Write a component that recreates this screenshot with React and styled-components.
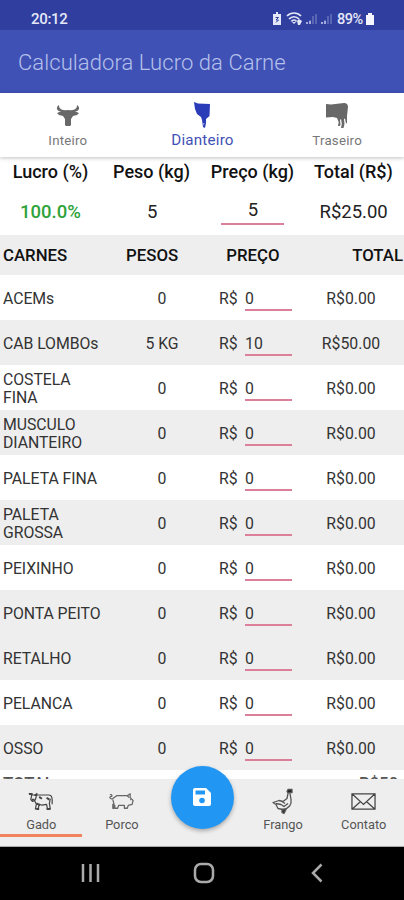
import React, { useState } from "react";
import styled, { createGlobalStyle } from "styled-components";

const meats = [
  { name: "ACEMs", weight: "0", price: "0", total: "R$0.00" },
  { name: "CAB LOMBOs", weight: "5 KG", price: "10", total: "R$50.00", shaded: true },
  { name: "COSTELA FINA", weight: "0", price: "0", total: "R$0.00" },
  { name: "MUSCULO DIANTEIRO", weight: "0", price: "0", total: "R$0.00", shaded: true },
  { name: "PALETA FINA", weight: "0", price: "0", total: "R$0.00" },
  { name: "PALETA GROSSA", weight: "0", price: "0", total: "R$0.00", shaded: true },
  { name: "PEIXINHO", weight: "0", price: "0", total: "R$0.00" },
  { name: "PONTA PEITO", weight: "0", price: "0", total: "R$0.00", shaded: true },
  { name: "RETALHO", weight: "0", price: "0", total: "R$0.00", shaded: true },
  { name: "PELANCA", weight: "0", price: "0", total: "R$0.00" },
  { name: "OSSO", weight: "0", price: "0", total: "R$0.00", shaded: true },
];

const BullIcon = () => (
  <svg width="26" height="24" viewBox="0 0 26 24" fill="#686868">
    <path d="M4 2C0 5 2 8 7 9l6-1 6 1c5-1 7-4 3-7 0 3-1 4-4 5l-5 1-5-1C5 6 4 5 4 2Z" />
    <path d="M2 10l5-2 6-1 6 1 5 2-2 2-4 1-2 3v6l-1 1h-4l-1-1v-6l-2-3-4-1Z" />
  </svg>
);

const FrontIcon = () => (
  <svg width="18" height="28" viewBox="0 0 18 28" fill="#2b3cb8">
    <path d="M1 1l4 1.5 12 .5-.5 12-3.5 3v4l-1 5-2-1-1-7-1-3-4-3-2-5Z" />
    <path d="M10 22l.7 3 .8-3Z" fill="#9da6df" />
  </svg>
);

const BackIcon = () => (
  <svg width="24" height="28" viewBox="0 0 24 28" fill="#686868">
    <path d="M1 3l5 .5L19 2c3 0 4 2 4 4l-1 9v7l-1 .5-1-5-1 .5.5 5-1 4H16l.8-4-.8-5-1 1 .5 5-1 1H13l.7-4-1.7-4-4-1-7 .5Z" />
  </svg>
);

const CowIcon = () => (
  <svg width="26" height="21" viewBox="0 0 28 22" fill="none" stroke="#444" strokeWidth="1.3" strokeLinejoin="round">
    <path d="M8 4h14c3 0 4 2 4 5v5M24 8l-1 5 1 6h-3l-1-5-5 1-3-1-1 5H8l1-5-2-4" />
    <path d="M1 2l3 2h4l2-2M4 4l-1 5 2 2 3-2 1-4" />
    <path d="M1 3h4M7 4h3M4 9h3M12 6l3 2M20 7l3 2M9 13l4 2M9 19h3M20 19h4" strokeWidth="2.1" />
  </svg>
);

const PigIcon = () => (
  <svg width="27" height="21" viewBox="0 0 28 22" fill="none" stroke="#666" strokeWidth="1.3" strokeLinejoin="round">
    <path d="M2 4c2-1 3 2 1 2-2 0-1 3 2 2l4-3h11l3-2v4l3 3-1 4-4 1-1 3h-3v-3h-6l-1 3h-3v-3l-2-1v4H6v-5L5 9" />
    <path d="M20 5l2 2M23 9h1" />
  </svg>
);

const ChickenIcon = () => (
  <svg width="24" height="28" viewBox="0 0 24 28" fill="none" stroke="#555" strokeWidth="1.3" strokeLinejoin="round">
    <path d="M17 6l-1 5-4 3-4-1-6 2 3 2 2 4 5 1c6-1 9-5 8-10l-1-6M5 16l5 1 3 2 4-3M11 14l3 2" />
    <path d="M16 4l1-2h4v3l-4 .5Z" fill="#222" />
    <path d="M11 22h4l-2 4-2-1Z" fill="#333" />
  </svg>
);

const MailIcon = () => (
  <svg width="25" height="19" viewBox="0 0 26 20" fill="none" stroke="#444" strokeWidth="1.3">
    <path d="M1 2h24v16H1ZM1 2l12 11L25 2M1 18l9-8M25 18l-9-8" />
  </svg>
);

const StatusIcons = () => (
  <svg width="60" height="16" viewBox="0 0 60 16">
    <path d="M2 3h2V1h2v2h3v11H1V3Z" fill="#e5e8f8" />
    <path d="M3.5 6.5h3L4 9h2.5L4 11.5" fill="none" stroke="#303f9f" />
    <path d="M15 5c4-4 10-4 14 0M17 8c3-3 7-3 10 0M19.5 10.5c1-2 4-2 5 0" fill="none" stroke="#e5e8f8" strokeWidth="1.7" />
    <path d="M20 11h4l-2 2ZM25 10l2-2 3 2-2 4h-2Z" fill="#e5e8f8" />
    <path d="M35 13v-2M38 13v-4M41 13V5M44 13V3M50 13v-2M53 13v-4M56 13V5M59 13V3" stroke="#5966b5" strokeWidth="2" />
    <path d="M35 13v-2M38 13v-3M50 13v-2M53 13v-3" stroke="#a3acdd" strokeWidth="2" />
  </svg>
);

const SaveIcon = () => (
  <svg width="20" height="20" viewBox="0 0 20 20">
    <path d="M3 1h11l5 5v11q0 2-2 2H3q-2 0-2-2V3q0-2 2-2Z" fill="#fff" />
    <path d="M3.5 3.5H13v4H3.5Z" fill="#2196f3" />
    <circle cx="10" cy="13.5" r="2.8" fill="#2196f3" />
  </svg>
);

const tabs = [
  { name: "Inteiro", icon: <BullIcon /> },
  { name: "Dianteiro", icon: <FrontIcon /> },
  { name: "Traseiro", icon: <BackIcon /> },
];

export default function App() {
  const [tab, setTab] = useState("Dianteiro");
  const [profitPrice, setProfitPrice] = useState("5");
  const [prices, setPrices] = useState(meats.map((meat) => meat.price));

  const handlePrice = (index, value) => {
    setPrices(prices.map((price, i) => (i === index ? value : price)));
  };

  return (
    <Screen>
      <GlobalStyle />
      <StatusBar>
        <span>20:12</span>
        <StatusRight>
          <StatusIcons />
          <BatteryText>89%</BatteryText>
          <svg width="8" height="12" viewBox="0 0 8 12" fill="#f4f5ff">
            <path d="M2 0h4v2h2v10H0V2h2Z" />
          </svg>
        </StatusRight>
      </StatusBar>
      <AppBar>Calculadora Lucro da Carne</AppBar>
      <Tabs>
        {tabs.map(({ name, icon }) => (
          <Tab key={name} $active={tab === name} onClick={() => setTab(name)}>
            <TabIcon>{icon}</TabIcon>
            <span>{name}</span>
          </Tab>
        ))}
      </Tabs>
      <Content>
        <SummaryTitles>
          <span>Lucro (%)</span>
          <span>Peso (kg)</span>
          <span>Preço (kg)</span>
          <span>Total (R$)</span>
        </SummaryTitles>
        <SummaryValues>
          <Profit>100.0%</Profit>
          <span>5</span>
          <SummaryInput value={profitPrice} onChange={(e) => setProfitPrice(e.target.value)} />
          <span>R$25.00</span>
        </SummaryValues>
        <TableHeader>
          <span>CARNES</span>
          <span>PESOS</span>
          <span>PREÇO</span>
          <span>TOTAL</span>
        </TableHeader>
        {meats.map((meat, index) => (
          <Row key={meat.name} $shaded={meat.shaded}>
            <Name>{meat.name}</Name>
            <Cell>{meat.weight}</Cell>
            <Price>
              R$
              <PriceInput value={prices[index]} onChange={(e) => handlePrice(index, e.target.value)} />
            </Price>
            <Cell>{meat.total}</Cell>
          </Row>
        ))}
        <TotalRow>
          <span>TOTAL</span>
          <span>R$50.00</span>
        </TotalRow>
      </Content>
      <BottomNav>
        <NavItem $active>
          <CowIcon />
          <span>Gado</span>
        </NavItem>
        <NavItem>
          <PigIcon />
          <span>Porco</span>
        </NavItem>
        <SaveButton aria-label="Salvar">
          <SaveIcon />
        </SaveButton>
        <NavItem>
          <ChickenIcon />
          <span>Frango</span>
        </NavItem>
        <NavItem>
          <MailIcon />
          <span>Contato</span>
        </NavItem>
      </BottomNav>
      <SystemBar>
        <svg width="20" height="20" viewBox="0 0 20 20">
          <path d="M2 1v18M9.5 1v18M17 1v18" />
        </svg>
        <svg width="22" height="22" viewBox="0 0 22 22">
          <rect x="2" y="2" width="18" height="18" rx="6" />
        </svg>
        <svg width="14" height="20" viewBox="0 0 14 20">
          <path d="M11.5 1.5L3 10l8.5 8.5" />
        </svg>
      </SystemBar>
    </Screen>
  );
}

const GlobalStyle = createGlobalStyle`
  * {
    box-sizing: border-box;
  }
  body {
    margin: 0;
    font-family: Roboto, "Liberation Sans", sans-serif;
  }
  input, button {
    font: inherit;
    color: inherit;
    border: 0;
    padding: 0;
    outline: none;
    background: none;
  }
`;

const Screen = styled.div`
  display: flex;
  flex-direction: column;
  width: 404px;
  height: 900px;
  overflow: hidden;
  background: #fff;
`;

const StatusBar = styled.header`
  display: flex;
  justify-content: space-between;
  align-items: center;
  flex: 0 0 30px;
  padding: 8px 30px 0 31px;
  background: #303f9f;
  color: #e5e8f8;
  font-size: 15px;
  font-weight: 500;
  letter-spacing: -0.3px;
`;

const StatusRight = styled.div`
  display: flex;
  align-items: center;
`;

const BatteryText = styled.span`
  width: 29px;
  margin-left: 5px;
  font-size: 14.5px;
  letter-spacing: -0.5px;
`;

const AppBar = styled.div`
  display: flex;
  align-items: center;
  flex: 0 0 63px;
  padding: 2px 18px 0;
  background: #3f51b5;
  color: #b5c0eb;
  font-size: 22px;
  font-weight: 300;
  letter-spacing: 0.08px;
`;

const Tabs = styled.nav`
  display: grid;
  grid-template-columns: repeat(3, 1fr);
  flex: 0 0 64px;
  z-index: 1;
  background: #fff;
  box-shadow: 0 1px 4px rgba(0, 0, 0, 0.25);
`;

const Tab = styled.button`
  display: flex;
  flex-direction: column;
  align-items: center;
  padding-left: 1px;
  color: ${(props) => (props.$active ? "#3f51b5" : "#777")};
  font-size: ${(props) => (props.$active ? "15.2px" : "13.3px")};
  line-height: ${(props) => (props.$active ? "20px" : "22px")};
  letter-spacing: 0.2px;
  cursor: pointer;
`;

const TabIcon = styled.div`
  display: flex;
  align-items: center;
  height: 37px;
  padding-top: 6px;
`;

const Content = styled.main`
  flex: 1;
  min-height: 0;
  overflow: hidden;
`;

const SummaryTitles = styled.div`
  display: grid;
  grid-template-columns: repeat(4, 1fr);
  height: 30px;
  line-height: 30px;
  text-align: center;
  font-size: 18px;
  font-weight: 500;
  color: #111;
`;

const SummaryValues = styled.div`
  display: grid;
  grid-template-columns: repeat(4, 1fr);
  height: 48px;
  padding-left: 1px;
  line-height: 50px;
  text-align: center;
  font-size: 18.5px;
  color: #222;
`;

const Profit = styled.span`
  padding-right: 2px;
  color: #2fa33a;
  font-weight: 500;
`;

const SummaryInput = styled.input`
  width: 63px;
  height: 29px;
  margin: 9px auto 0;
  text-align: center;
  border-bottom: 2px solid #dc8099;
`;

const TableHeader = styled.div`
  display: grid;
  grid-template-columns: repeat(4, 1fr);
  height: 40px;
  padding-left: 1px;
  line-height: 40px;
  background: #eee;
  color: #111;
  text-align: center;
  font-size: 16.8px;
  font-weight: 500;

  span:first-child {
    padding-left: 2px;
    text-align: left;
  }
  span:last-child {
    padding-right: 1px;
    text-align: right;
  }
`;

const Row = styled.div`
  display: grid;
  grid-template-columns: 110px 104px 84px 106px;
  align-items: center;
  height: 45px;
  padding-top: 2px;
  background: ${(props) => (props.$shaded ? "#eee" : "#fff")};
  color: #333;
  font-size: 15.8px;
`;

const Name = styled.div`
  padding: 0 7px 0 3px;
  line-height: 18px;
  letter-spacing: -0.05px;
`;

const Cell = styled.div`
  text-align: center;
`;

const Price = styled.div`
  display: flex;
  align-items: center;
  justify-content: space-between;
  padding: 0 6px 0 5px;
`;

const PriceInput = styled.input`
  width: 47px;
  height: 25px;
  padding-top: 2px;
  border-bottom: 2px solid #dc8099;
`;

const TotalRow = styled.div`
  display: flex;
  justify-content: space-between;
  padding: 3px 0 0 3px;
  font-size: 16.8px;
  font-weight: 500;
  color: #555;

  span:last-child {
    width: 45px;
    white-space: nowrap;
  }
`;

const BottomNav = styled.nav`
  display: grid;
  grid-template-columns: repeat(5, 1fr);
  flex: 0 0 68px;
  z-index: 1;
  padding-left: 1px;
  background: #eee;
  border-bottom: 1px solid #aaa;
`;

const NavItem = styled.div`
  display: flex;
  flex-direction: column;
  align-items: center;
  height: 58px;
  margin-left: ${(props) => (props.$active ? "-1px" : "0")};
  padding: 8px 0 0 ${(props) => (props.$active ? "1px" : "0")};
  border-bottom: 3px solid ${(props) => (props.$active ? "#f3825f" : "transparent")};
  color: #555;
  font-size: 12.8px;
  line-height: 18px;

  svg {
    flex: 0 0 29px;
  }
`;

const SaveButton = styled.button`
  display: flex;
  align-items: center;
  justify-content: center;
  justify-self: center;
  width: 63px;
  height: 63px;
  margin-top: -13px;
  padding-bottom: 2px;
  border-radius: 50%;
  background: #2196f3;
  box-shadow: 0 2px 4px rgba(0, 0, 0, 0.3);
  cursor: pointer;
`;

const SystemBar = styled.footer`
  display: flex;
  align-items: center;
  flex: 0 0 53px;
  padding: 0 0 2px 81px;
  background: #000;

  svg {
    fill: none;
    stroke: #aaa;
    stroke-width: 2.5;
  }
  svg:nth-child(2) {
    margin: 0 95px 0 92px;
  }
`;
